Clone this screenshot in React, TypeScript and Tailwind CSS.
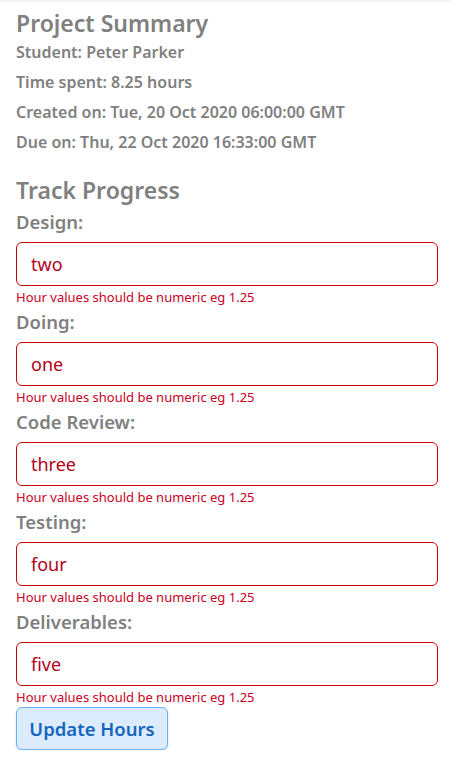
import React from 'react'

const phases = [
  { label: 'Design:', value: 'two' },
  { label: 'Doing:', value: 'one' },
  { label: 'Code Review:', value: 'three' },
  { label: 'Testing:', value: 'four' },
  { label: 'Deliverables:', value: 'five' },
]

export default function App() {
  return (
    <div
      className="border-t-2 border-[#f4f4f4] bg-white pl-4 pr-[13px] pt-[7px] text-[#808080]"
      style={{ fontFamily: '"Noto Sans", "Open Sans", sans-serif' }}
    >
      <h2 className="text-[23px] font-semibold leading-[28px]">Project Summary</h2>
      <div className="grid text-[16px] font-semibold">
        <p className="leading-[30px]">Student: Peter Parker</p>
        <p className="leading-[30px]">Time spent: 8.25 hours</p>
        <p className="leading-[30px]">Created on: Tue, 20 Oct 2020 06:00:00 GMT</p>
        <p className="leading-[30px]">Due on: Thu, 22 Oct 2020 16:33:00 GMT</p>
      </div>

      <h2 className="mb-[3px] mt-[19px] text-[23px] font-semibold leading-[28px]">Track Progress</h2>
      <div className="grid">
        {phases.map((p) => (
          <div key={p.label} className="flex flex-col">
            <label className="mb-[5px] text-[18.5px] font-semibold leading-[30px]">{p.label}</label>
            <input
              readOnly
              value={p.value}
              className="h-[44px] w-full rounded-[6px] border border-[#cc0000] px-[14px] text-[18px] text-[#b3001b] outline-none"
            />
            <p className="mt-[2px] text-[13px] leading-[19px] text-[#c8001e]">Hour values should be numeric eg 1.25</p>
          </div>
        ))}
      </div>
      <button className="h-[43px] w-[152px] rounded-[6px] border border-[#63b3f5] bg-[#dcecfe] text-[18.5px] font-semibold text-[#1565c0] shadow-[0_2px_3px_rgba(0,0,0,0.12)]">
        Update Hours
      </button>
    </div>
  )
}
